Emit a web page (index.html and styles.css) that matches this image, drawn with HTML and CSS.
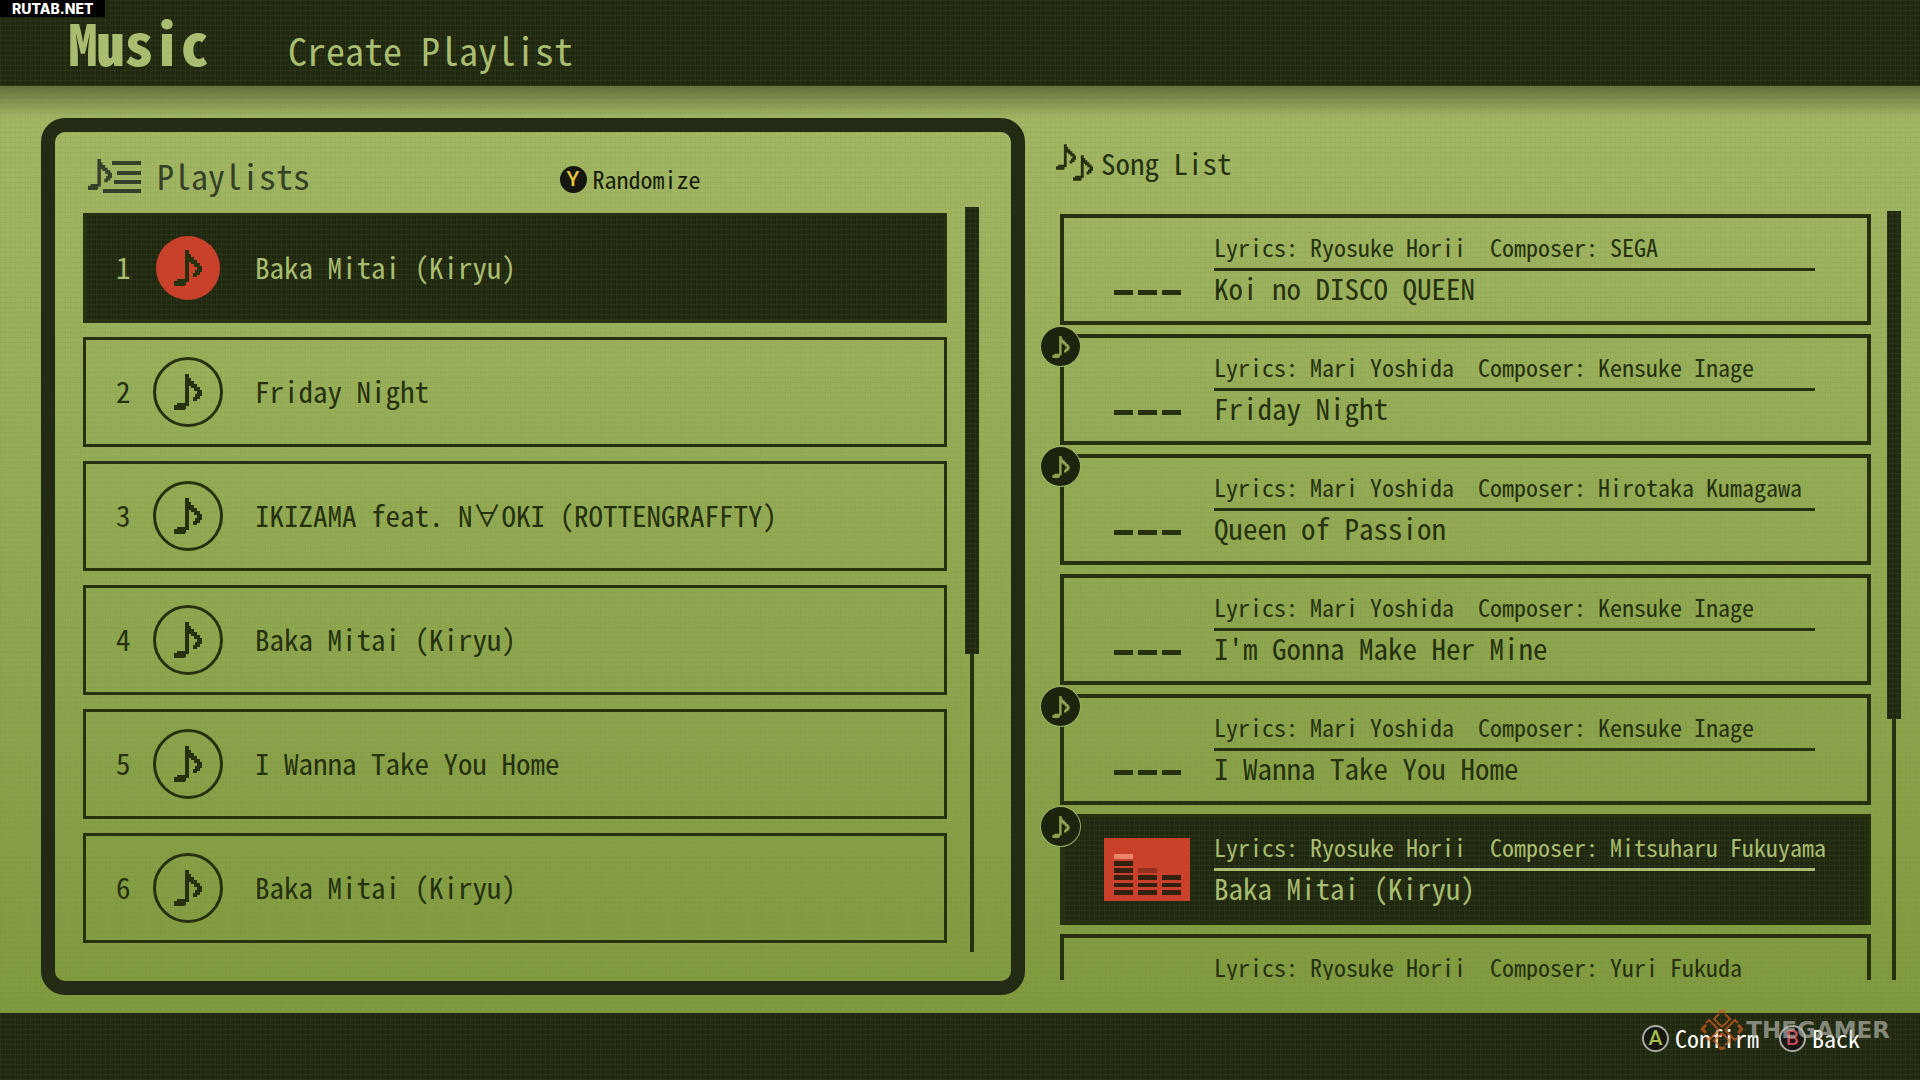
FILE: index.html
```html
<!DOCTYPE html>
<html lang="en">
<head>
  <meta charset="UTF-8" />
  <title>Music - Create Playlist</title>
  <link rel="stylesheet" href="styles.css">
</head>
<body>
  <svg class="sprite" aria-hidden="true">
    <symbol id="note" viewBox="0 0 28 36">
      <path d="M11 0h4v4h2v3h3v3h3v3h3v3h2v6h-2v3h-3v2h-4v-4h2v-3h2v-3h-3v-3h-3v-2h-2v20h-3v3h-1v1H0v-5h3v-2h8z" fill="currentColor"/>
    </symbol>
    <symbol id="dashes" viewBox="0 0 86 63">
      <path d="M10 52h19v5H10zM34 52h19v5H34zM58 52h19v5H58z" fill="currentColor"/>
    </symbol>
  </svg>

  <header class="topbar">
    <h1>Music</h1>
    <h2>Create Playlist</h2>
    <span class="site-tag">RUTAB.NET</span>
  </header>

  <main>
    <section class="playlists">
      <div class="playlists-head">
        <h3>
          <svg width="53" height="34" viewBox="0 0 53 34">
            <use href="#note" x="0" y="0" width="24" height="31"/>
            <path d="M24 2h29v4H24zM29 12h24v4H29zM26 21h27v4H26zM15 30h38v4H15z" fill="currentColor"/>
          </svg>
          Playlists
        </h3>
        <button class="hint"><span class="key key-y">Y</span>Randomize</button>
      </div>
      <div class="scroll-area">
        <ol class="tracks">
          <li><button class="track selected"><span class="num">1</span><span class="disc"><svg><use href="#note"/></svg></span>Baka Mitai (Kiryu)</button></li>
          <li><button class="track"><span class="num">2</span><span class="disc"><svg><use href="#note"/></svg></span>Friday Night</button></li>
          <li><button class="track"><span class="num">3</span><span class="disc"><svg><use href="#note"/></svg></span>IKIZAMA feat. N∀OKI (ROTTENGRAFFTY)</button></li>
          <li><button class="track"><span class="num">4</span><span class="disc"><svg><use href="#note"/></svg></span>Baka Mitai (Kiryu)</button></li>
          <li><button class="track"><span class="num">5</span><span class="disc"><svg><use href="#note"/></svg></span>I Wanna Take You Home</button></li>
          <li><button class="track"><span class="num">6</span><span class="disc"><svg><use href="#note"/></svg></span>Baka Mitai (Kiryu)</button></li>
        </ol>
        <div class="scrollbar"><div class="thumb thumb-playlists"></div></div>
      </div>
    </section>

    <section class="songs">
      <h3>
        <svg width="37" height="41" viewBox="0 0 37 41">
          <use href="#note" x="0" y="0" width="20" height="30"/>
          <use href="#note" x="17" y="11" width="20" height="30"/>
        </svg>
        Song List
      </h3>
      <div class="scroll-area">
        <ul class="song-list">
          <li>
            <button class="song">
              <svg class="level"><use href="#dashes"/></svg>
              <span class="info">
                <span class="credits"><span>Lyrics: Ryosuke Horii</span><span>Composer: SEGA</span></span>
                <span class="title">Koi no DISCO QUEEN</span>
              </span>
            </button>
          </li>
          <li>
            <button class="song">
              <span class="badge"><svg><use href="#note"/></svg></span>
              <svg class="level"><use href="#dashes"/></svg>
              <span class="info">
                <span class="credits"><span>Lyrics: Mari Yoshida</span><span>Composer: Kensuke Inage</span></span>
                <span class="title">Friday Night</span>
              </span>
            </button>
          </li>
          <li>
            <button class="song">
              <span class="badge"><svg><use href="#note"/></svg></span>
              <svg class="level"><use href="#dashes"/></svg>
              <span class="info">
                <span class="credits"><span>Lyrics: Mari Yoshida</span><span>Composer: Hirotaka Kumagawa</span></span>
                <span class="title">Queen of Passion</span>
              </span>
            </button>
          </li>
          <li>
            <button class="song">
              <svg class="level"><use href="#dashes"/></svg>
              <span class="info">
                <span class="credits"><span>Lyrics: Mari Yoshida</span><span>Composer: Kensuke Inage</span></span>
                <span class="title">I'm Gonna Make Her Mine</span>
              </span>
            </button>
          </li>
          <li>
            <button class="song">
              <span class="badge"><svg><use href="#note"/></svg></span>
              <svg class="level"><use href="#dashes"/></svg>
              <span class="info">
                <span class="credits"><span>Lyrics: Mari Yoshida</span><span>Composer: Kensuke Inage</span></span>
                <span class="title">I Wanna Take You Home</span>
              </span>
            </button>
          </li>
          <li>
            <button class="song selected">
              <span class="badge"><svg><use href="#note"/></svg></span>
              <svg class="level playing" viewBox="0 0 86 63">
                <path d="M10 16h19v5H10z" fill="#ee8468"/>
                <path d="M34 30h19v5H34z" fill="#93301f"/>
                <path d="M10 23h19v5H10zM10 30h19v5H10zM10 37h19v5H10zM10 45h19v4H10zM10 52h19v5H10zM34 37h19v5H34zM34 45h19v4H34zM34 52h19v5H34zM58 37h19v5H58zM58 45h19v4H58zM58 52h19v5H58z" fill="#34200f"/>
              </svg>
              <span class="info">
                <span class="credits"><span>Lyrics: Ryosuke Horii</span><span>Composer: Mitsuharu Fukuyama</span></span>
                <span class="title">Baka Mitai (Kiryu)</span>
              </span>
            </button>
          </li>
          <li>
            <button class="song">
              <svg class="level"><use href="#dashes"/></svg>
              <span class="info">
                <span class="credits"><span>Lyrics: Ryosuke Horii</span><span>Composer: Yuri Fukuda</span></span>
              </span>
            </button>
          </li>
        </ul>
        <div class="scrollbar"><div class="thumb thumb-songs"></div></div>
      </div>
    </section>
  </main>

  <footer>
    <button class="hint"><span class="key key-a">A</span>Confirm</button>
    <button class="hint"><span class="key key-b">B</span>Back</button>
    <div class="watermark">
      <svg width="42" height="40" viewBox="0 0 42 40" fill="none" stroke="currentColor" stroke-width="2">
        <path d="M21 17l-8-8 5-5M21 17l8-8-5-5M21 23l-8 8 5 4M21 23l8 8-5 4M18 20L8 10l-3 3M18 20L8 30l-3-3M24 20l10-10 3 3M24 20l10 10 3-3"/>
        <path d="M18 2l3-2 3 2M18 37l3 2 3-2M5 15l-4 4 4 4M37 15l4 4-4 4" stroke-width="3"/>
      </svg>
      <span>THEGAMER</span>
    </div>
  </footer>
</body>
</html>
```
FILE: styles.css
```css
:root {
  --dark: #20280f;
  --ink: #25310f;
  --green: #a9bd70;
  --red: #c9402b;
  --dots: repeating-linear-gradient(0deg, rgba(120, 130, 90, 0.1) 0 1px, transparent 1px 5px),
    repeating-linear-gradient(90deg, rgba(120, 130, 90, 0.1) 0 1px, transparent 1px 5px);
}

* {
  box-sizing: border-box;
}

body {
  margin: 0;
  height: 100vh;
  display: flex;
  flex-direction: column;
  overflow: hidden;
  background: #8fa64e;
  color: var(--ink);
  font-family: "Noto Sans CJK JP", monospace;
  font-feature-settings: "hwid";
  font-variant-ligatures: none;
}

h1, h2, h3, ol, ul {
  margin: 0;
  padding: 0;
  font-weight: 400;
  list-style: none;
}

button {
  border: none;
  padding: 0;
  background: none;
  color: inherit;
  font-family: inherit;
  font-feature-settings: inherit;
  font-variant-ligatures: inherit;
  text-align: left;
  white-space: nowrap;
  cursor: pointer;
}

svg {
  flex: none;
}

.sprite {
  display: none;
}

/* top bar */
.topbar {
  position: relative;
  flex: none;
  display: flex;
  align-items: baseline;
  gap: 79px;
  height: 86px;
  padding: 12px 0 0 69px;
  background: var(--dots), var(--dark);
  color: var(--green);
}

.topbar h1 {
  font-size: 56px;
  font-weight: 900;
  line-height: 60px;
}

.topbar h2 {
  font-size: 38px;
  line-height: 60px;
}

.site-tag {
  position: absolute;
  top: 0;
  left: 0;
  padding: 0 12px;
  background: #000;
  color: #fff;
  font: 800 14px/17px Inter, sans-serif;
}

/* columns */
main {
  flex: 1;
  min-height: 0;
  display: grid;
  grid-template-columns: minmax(0, 984fr) minmax(0, 841fr);
  grid-template-rows: minmax(0, 1fr);
  gap: 35px;
  padding: 32px 19px 18px 41px;
  background:
    linear-gradient(rgba(50, 55, 30, 0.55), rgba(50, 55, 30, 0) 32px),
    repeating-linear-gradient(0deg, rgba(70, 90, 30, 0.05) 0 1px, transparent 1px 5px),
    repeating-linear-gradient(90deg, rgba(70, 90, 30, 0.05) 0 1px, transparent 1px 5px),
    linear-gradient(#a3b865, #809a3f);
}

h3 {
  display: flex;
  align-items: center;
}

.scroll-area {
  flex: 1;
  min-height: 0;
  display: flex;
}

.scrollbar {
  flex: none;
  width: 14px;
  background: linear-gradient(var(--ink), var(--ink)) center / 4px 100% no-repeat;
}

.thumb {
  background: var(--dots), var(--dark);
}

.thumb-playlists {
  height: 60%;
}

.thumb-songs {
  height: 66%;
}

/* playlists */
.playlists {
  display: flex;
  flex-direction: column;
  padding: 24px 32px 29px 28px;
  border: 14px solid #232b14;
  border-radius: 24px;
}

.playlists-head {
  display: grid;
  grid-template-columns: 1fr 1fr;
  gap: 20px;
  align-items: center;
  height: 40px;
  margin: 0 -32px 11px 5px;
}

.playlists h3 {
  gap: 16px;
  font-size: 34px;
  line-height: 40px;
  color: #354028;
}

.playlists-head .hint {
  padding-top: 6px;
  color: #171d0c;
}

.tracks {
  flex: 1;
  display: flex;
  flex-direction: column;
  gap: 14px;
  padding-top: 6px;
  margin-right: 18px;
  overflow: hidden;
}

.track {
  display: flex;
  align-items: center;
  width: 100%;
  height: 110px;
  padding: 0 30px 4px;
  border: 3px solid var(--ink);
  font-size: 29px;
  line-height: 40px;
}

.num {
  width: 37px;
}

.disc {
  display: flex;
  align-items: center;
  justify-content: center;
  width: 70px;
  height: 70px;
  margin: 4px 32px 0 0;
  border: 3px solid var(--ink);
  border-radius: 50%;
  color: var(--ink);
}

.disc svg {
  width: 28px;
  height: 36px;
}

.selected {
  background: var(--dots), var(--dark);
  color: var(--green);
}

.selected .disc {
  border-color: transparent;
  background: var(--red) padding-box;
}

/* song list */
.songs {
  display: flex;
  flex-direction: column;
  padding: 24px 0 15px;
}

.songs h3 {
  gap: 8px;
  margin: 0 0 28px -4px;
  font-size: 29px;
  line-height: 41px;
}

.song-list {
  flex: 1;
  min-width: 0;
  display: flex;
  flex-direction: column;
  gap: 9px;
  padding-top: 3px;
  margin-right: 16px;
  overflow-x: visible;
  overflow-y: clip;
}

.song {
  position: relative;
  display: flex;
  align-items: flex-start;
  gap: 24px;
  width: 100%;
  height: 111px;
  padding: 13px 52px 0 40px;
  border: 4px solid var(--ink);
}

.level {
  width: 86px;
  height: 63px;
  margin-top: 7px;
}

.playing {
  background: var(--red);
}

.info {
  flex: 1;
  min-width: 0;
}

.credits {
  display: flex;
  gap: 24px;
  height: 40px;
  border-bottom: 3px solid currentColor;
  font-size: 24px;
  line-height: 32px;
}

.title {
  display: block;
  font-size: 29px;
  line-height: 32px;
}

.badge {
  position: absolute;
  top: -11px;
  left: -23px;
  display: flex;
  align-items: center;
  justify-content: center;
  width: 39px;
  height: 39px;
  border-radius: 50%;
  background: #1c240e;
  box-shadow: 0 0 0 1px #9bb062;
  color: #8ca250;
}

.badge svg {
  width: 18px;
  height: 22px;
}

/* button hints */
.hint {
  display: flex;
  align-items: center;
  gap: 6px;
  font-size: 24px;
  line-height: 28px;
}

.key {
  width: 27px;
  height: 27px;
  border: 2px solid #a8aaa4;
  border-radius: 50%;
  background: #14160f;
  font: 500 21px/23px Roboto, sans-serif;
  text-align: center;
}

.key-y {
  border-color: #14160f;
  color: #e8c63a;
}

.key-a {
  color: #a5bf4b;
}

.key-b {
  color: #c04a58;
}

footer {
  position: relative;
  flex: none;
  display: flex;
  justify-content: flex-end;
  gap: 20px;
  height: 67px;
  padding: 11px 60px 0 0;
  background: var(--dots), var(--dark);
  color: #fff;
}

footer .hint {
  height: 28px;
}

.watermark {
  position: absolute;
  top: -3px;
  right: 30px;
  display: flex;
  align-items: center;
  gap: 3px;
  color: rgba(200, 90, 30, 0.75);
  pointer-events: none;
}

.watermark span {
  color: rgba(190, 192, 186, 0.65);
  font: 700 23px/40px "DejaVu Sans", sans-serif;
}
```
